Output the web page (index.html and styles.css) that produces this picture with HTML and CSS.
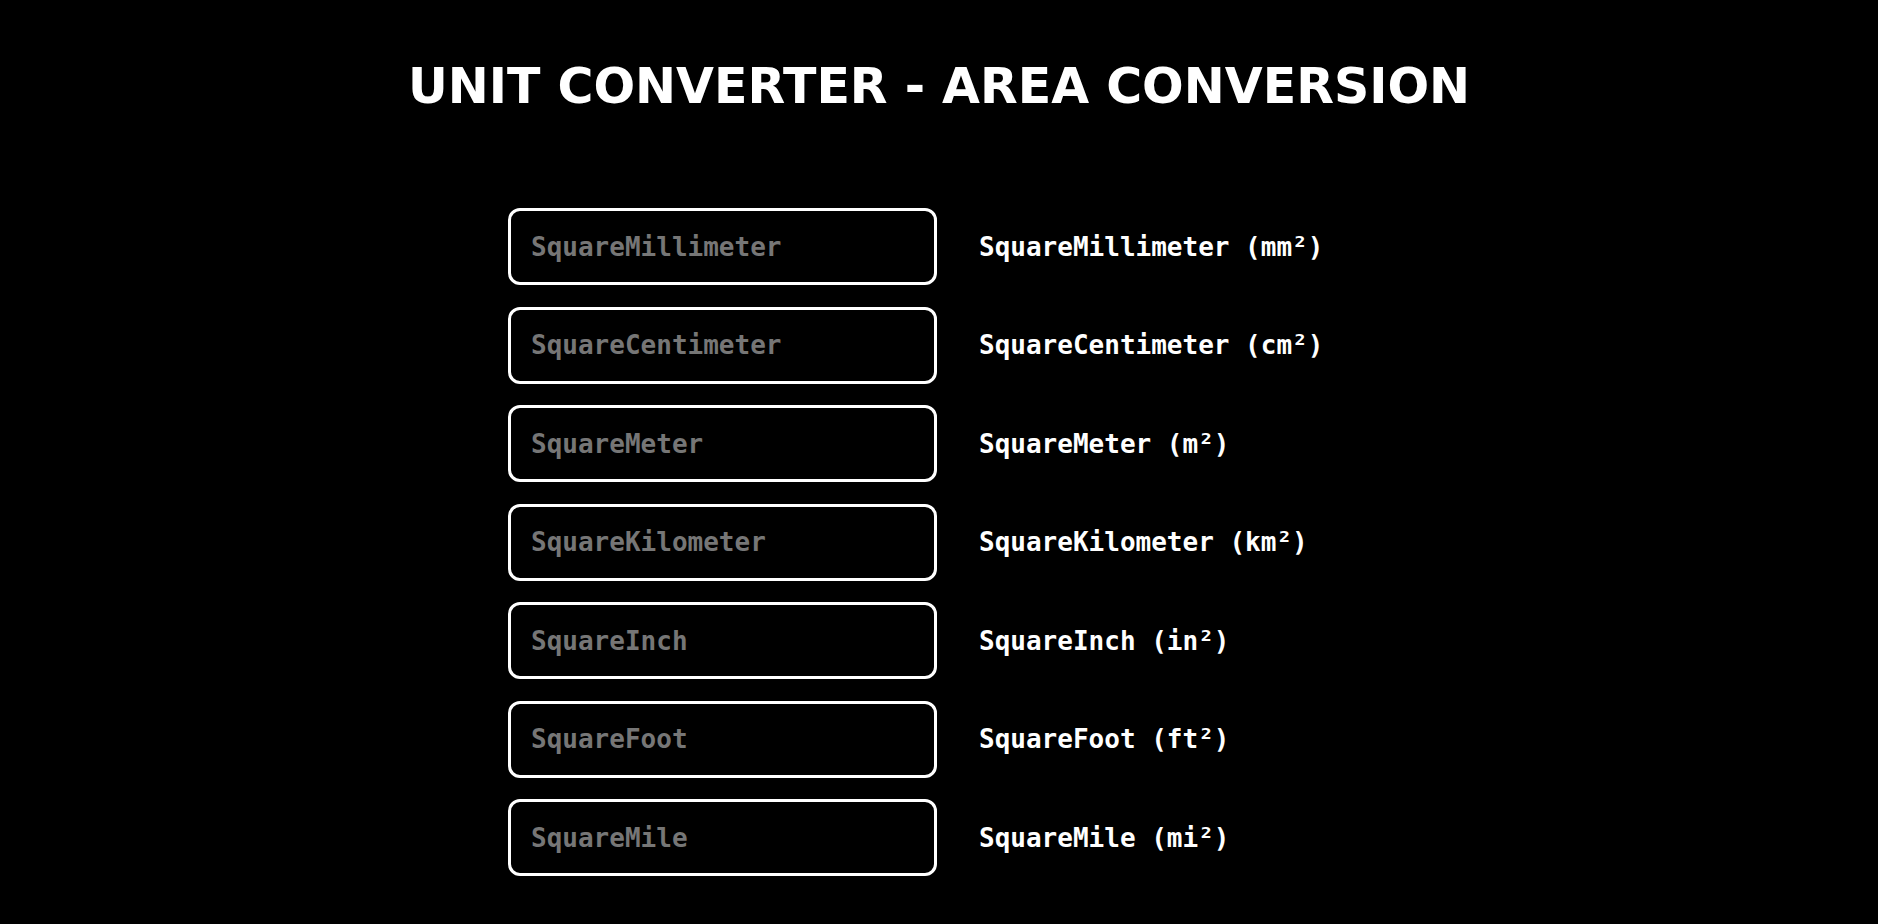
FILE: index.html
```html
<!DOCTYPE html>
<html lang="en">
<head>
<meta charset="utf-8">
<title>Unit Converter - Area Conversion</title>
<link rel="stylesheet" href="styles.css">
</head>
<body>
<h1 class="title">UNIT CONVERTER - AREA CONVERSION</h1>
<div class="converter">
  <div class="row"><input class="field" type="text" placeholder="SquareMillimeter"><span class="label">SquareMillimeter (mm²)</span></div>
  <div class="row"><input class="field" type="text" placeholder="SquareCentimeter"><span class="label">SquareCentimeter (cm²)</span></div>
  <div class="row"><input class="field" type="text" placeholder="SquareMeter"><span class="label">SquareMeter (m²)</span></div>
  <div class="row"><input class="field" type="text" placeholder="SquareKilometer"><span class="label">SquareKilometer (km²)</span></div>
  <div class="row"><input class="field" type="text" placeholder="SquareInch"><span class="label">SquareInch (in²)</span></div>
  <div class="row"><input class="field" type="text" placeholder="SquareFoot"><span class="label">SquareFoot (ft²)</span></div>
  <div class="row"><input class="field" type="text" placeholder="SquareMile"><span class="label">SquareMile (mi²)</span></div>
</div>
</body>
</html>
```
FILE: styles.css
```css
html, body {
  margin: 0;
  padding: 0;
  background: #000;
  color: #fff;
}
body {
  font-family: "DejaVu Sans", Verdana, sans-serif;
}
.title {
  margin: 58px 0 0 0;
  font-size: 49px;
  font-weight: bold;
  text-align: center;
  line-height: 57px;
}
.converter {
  width: 862px;
  margin: 93px auto 0 auto;
  display: flex;
  flex-direction: column;
  gap: 21.5px;
}
.row {
  display: grid;
  grid-template-columns: 429px 1fr;
  column-gap: 42px;
  align-items: center;
}
.field {
  box-sizing: border-box;
  height: 77px;
  width: 429px;
  margin: 0;
  padding: 0 20px;
  background: #000;
  border: 3px solid #fff;
  border-radius: 12px;
  color: #fff;
  font-family: "DejaVu Sans Mono", monospace;
  font-size: 26px;
  font-weight: bold;
  outline: none;
}
.field::placeholder {
  color: #767676;
}
.label {
  font-family: "DejaVu Sans Mono", monospace;
  font-size: 26px;
  font-weight: bold;
  color: #fff;
}
```
